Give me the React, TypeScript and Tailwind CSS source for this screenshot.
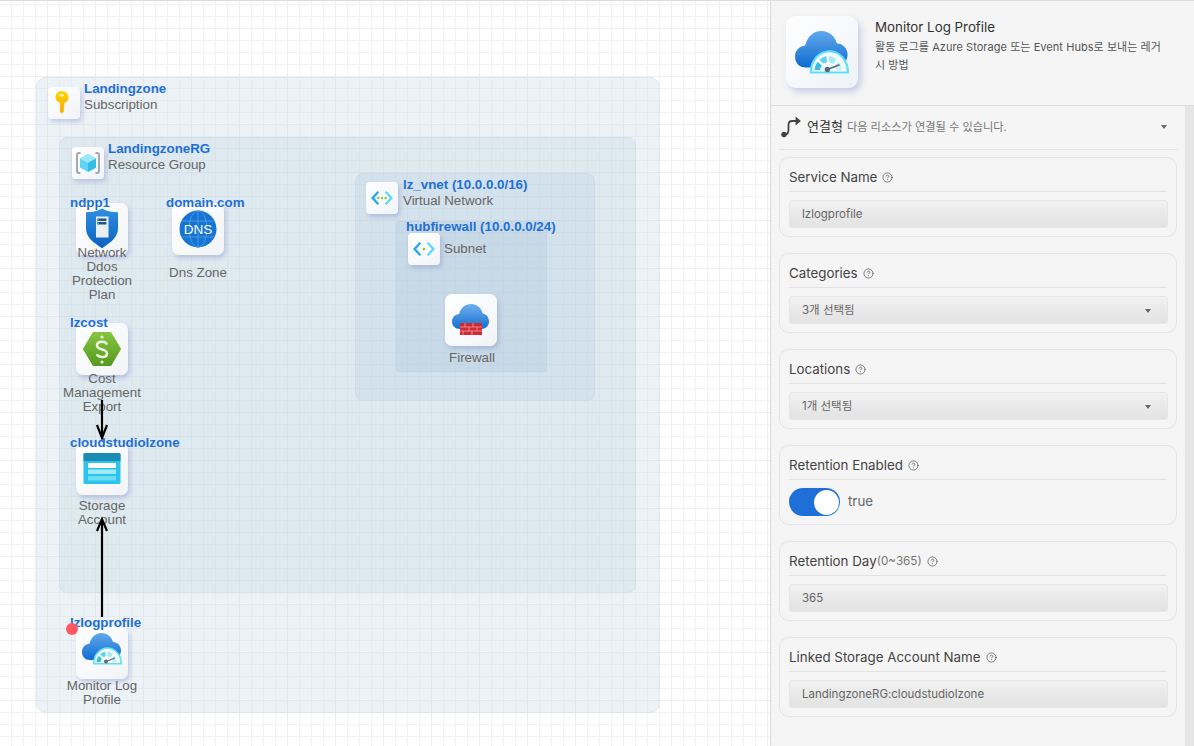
import { CircleHelp } from "lucide-react";
import type { ReactNode } from "react";

function KeyIcon() {
  return (
    <svg viewBox="0 0 32 32" className="h-8 w-8">
      <defs>
        <linearGradient id="key-g" x1="0" y1="0" x2="0" y2="1">
          <stop offset="0" stopColor="#ffd400" />
          <stop offset="1" stopColor="#f5a800" />
        </linearGradient>
      </defs>
      <path
        d="M13.500 4c3.800 0 7 2.800 7 6.300 0 2.500-1.600 4.700-4.100 5.700V19l-1.100 1.100 1.100 1.200-1.100 1.200 1.100 1.200-2.400 2.800-1.900-1.800v-8.700c-2.600-1-4.600-3.200-4.600-5.700C7.500 6.800 10.400 4 13.500 4z"
        fill="url(#key-g)"
      />
      <ellipse cx="13.500" cy="8.300" rx="2.500" ry="1.400" fill="#fff3b0" />
    </svg>
  );
}

function ResourceGroupIcon() {
  return (
    <svg viewBox="0 0 32 32" className="h-8 w-8">
      <path d="M8.500 6H7a2 2 0 0 0-2 2v16a2 2 0 0 0 2 2h1.500" fill="none" stroke="#a8a8a8" strokeWidth="2" />
      <path d="M23.500 6H25a2 2 0 0 1 2 2v16a2 2 0 0 1-2 2h-1.500" fill="none" stroke="#a8a8a8" strokeWidth="2" />
      <path d="M16 7l8 4.500v9L16 25l-8-4.500v-9z" fill="#5fd4f4" />
      <path d="M16 7l8 4.500-8 4.500-8-4.500z" fill="#9be8fb" />
      <path d="M16 16l8-4.500v9L16 25z" fill="#35bfe8" />
    </svg>
  );
}

function ShieldIcon() {
  return (
    <svg viewBox="0 0 52 52" className="h-[52px] w-[52px]">
      <defs>
        <linearGradient id="shield-g" x1="0" y1="0" x2="0" y2="1">
          <stop offset="0" stopColor="#2f8fe0" />
          <stop offset="1" stopColor="#0a62c0" />
        </linearGradient>
      </defs>
      <path d="M26 5.500c5 3 10 3.700 16 3.700v16c0 9-7 14-16 20-9-6-16-11-16-20v-16c6 0 11-.7 16-3.700z" fill="url(#shield-g)" />
      <rect x="20" y="13.500" width="12.500" height="21" fill="#e8eef2" />
      <rect x="21" y="15.500" width="9.500" height="2.400" rx="0.600" fill="#22557f" />
      <rect x="21" y="19" width="9.500" height="2.400" rx="0.600" fill="#22557f" />
      <circle cx="22" cy="16.700" r="0.700" fill="#7fe0f5" />
      <circle cx="22" cy="20.200" r="0.700" fill="#7fe0f5" />
    </svg>
  );
}

function DnsIcon() {
  return (
    <svg viewBox="0 0 52 52" className="h-[52px] w-[52px]">
      <circle cx="26" cy="26" r="18.500" fill="#1574d4" />
      <g fill="none" stroke="#5ca8ea" strokeWidth="0.700">
        <ellipse cx="26" cy="26" rx="9" ry="18.500" />
        <path d="M26 7.500v37M9 18h34M9 34h34" />
      </g>
      <text x="26" y="31" textAnchor="middle" fontFamily="Liberation Sans, sans-serif" fontSize="13.500" fill="#ffffff">
        DNS
      </text>
    </svg>
  );
}

function CostIcon() {
  return (
    <svg viewBox="0 0 52 52" className="h-[52px] w-[52px]">
      <defs>
        <linearGradient id="cost-g" x1="0" y1="0" x2="0" y2="1">
          <stop offset="0" stopColor="#86c440" />
          <stop offset="1" stopColor="#579a22" />
        </linearGradient>
      </defs>
      <path d="M17.500 10h17l9.500 16-9.500 16h-17L8 26z" fill="url(#cost-g)" stroke="url(#cost-g)" strokeWidth="2" strokeLinejoin="round" />
      <circle cx="26" cy="14" r="1.600" fill="#eef8de" />
      <circle cx="26" cy="39" r="1.600" fill="#eef8de" />
      <path d="M31 21.500c-1-2-2.800-2.700-5-2.700-3 0-5 1.400-5 3.600 0 5 10 3 10 8 0 2.200-2 3.600-5 3.600-2.200 0-4.200-.8-5.200-2.800" fill="none" stroke="#eef8de" strokeWidth="2.500" />
    </svg>
  );
}

function StorageIcon() {
  return (
    <svg viewBox="0 0 52 52" className="h-[52px] w-[52px]">
      <rect x="7.500" y="10" width="37" height="31" rx="1.500" fill="#2ac4ec" />
      <path d="M9 10h34a1.500 1.500 0 0 1 1.500 1.500V18h-37v-6.500A1.500 1.500 0 0 1 9 10z" fill="#1a8bb4" />
      <rect x="12" y="20" width="28" height="5" fill="#ffffff" />
      <rect x="12" y="26.500" width="28" height="4.500" fill="#9bebfb" />
      <rect x="12" y="33" width="28" height="4.500" fill="#6fdcf5" />
    </svg>
  );
}

function VnetIcon({ dots = 3 }: { dots?: number }) {
  return (
    <svg viewBox="0 0 32 32" className="h-8 w-8">
      <path d="M11.500 9L5 16l6.500 7 1.700-1.600L8.200 16l5-5.400z" fill="#28a8ea" />
      <path d="M20.500 9L27 16l-6.500 7-1.700-1.600 5-5.400-5-5.400z" fill="#5fd8f5" />
      {dots === 3 ? (
        <>
          <circle cx="12.300" cy="16" r="1.200" fill="#86c440" />
          <circle cx="16" cy="16" r="1.200" fill="#86c440" />
          <circle cx="19.700" cy="16" r="1.200" fill="#86c440" />
        </>
      ) : (
        <circle cx="16" cy="16" r="1.300" fill="#86c440" />
      )}
    </svg>
  );
}

function FirewallIcon() {
  return (
    <svg viewBox="0 0 52 52" className="h-[52px] w-[52px]">
      <defs>
        <linearGradient id="fw-g" x1="0" y1="0" x2="0" y2="1">
          <stop offset="0" stopColor="#6fb0ee" />
          <stop offset="1" stopColor="#1470d0" />
        </linearGradient>
      </defs>
      <path d="M15 35c-5 0-8-3.200-8-7.500 0-4 3-7.200 7.200-7.500C15.500 14 20 10 26 10s10.400 4 11.600 9.500c4 .5 6.400 4 6.400 8 0 4.300-3 7.500-8 7.500z" fill="url(#fw-g)" />
      <rect x="15" y="29" width="22" height="12" fill="#cf2a35" />
      <path d="M15 33h22M15 37h22M20 29v4M28 29v4M32 33v4M24 33v4M18 37v4M27 37v4" stroke="#f08e95" strokeWidth="0.900" fill="none" />
    </svg>
  );
}

function MonitorIcon({ size = 52 }: { size?: number }) {
  return (
    <svg viewBox="0 0 52 52" style={{ width: size, height: size }}>
      <defs>
        <linearGradient id="mon-g" x1="0" y1="0" x2="0" y2="1">
          <stop offset="0" stopColor="#62a9ec" />
          <stop offset="1" stopColor="#0f6cd0" />
        </linearGradient>
      </defs>
      <path d="M14 33c-5 0-8-3.500-8-8 0-4.500 3.200-7.800 7.500-8.200C15 10.500 19.500 6 25.500 6c5.700 0 10 3.700 11.500 9 4.500.4 8 3.800 8 8.300 0 5-3.500 9.700-8.500 9.700z" fill="url(#mon-g)" />
      <path d="M17 37.500v-1.700c0-8.200 6.500-15.500 14.500-15.500S46 27.600 46 35.800v1.700z" fill="#5fe0fa" />
      <path d="M18.700 36v-.5c0-7 5.700-13.700 12.800-13.700S44.300 28.500 44.300 35.500v.5z" fill="#f4fbfe" />
      <path d="M20.500 35c.3-2.700 1-4.500 2.400-6l3 2.600c-.7.800-1.100 2-1.300 3.400z" fill="#32bfe0" />
      <path d="M24 27.400c1.500-1.200 3.200-2.500 5.200-2.700l.6 4.500c-1 .2-1.900.6-2.700.9z" fill="#5fd3ec" />
      <path d="M31.500 24.600c1.900.2 3.700 1.500 5.200 2.600l-2.400 3.200c-.9-.6-1.900-1-3-1.200z" fill="#a4e8f7" />
      <path d="M38.200 28.500c1.300 1.500 2.200 4 2.500 6.500h-4c-.2-1-.6-2-1.200-2.800z" fill="#c8f0fa" />
      <path d="M30 34.500l9-3.500" stroke="#5a6b78" strokeWidth="1.300" />
      <circle cx="30" cy="34.500" r="2" fill="#5a6b78" />
    </svg>
  );
}

function Tile({ big, children, className }: { big?: boolean; children: ReactNode; className: string }) {
  return (
    <div
      className={`absolute ${big ? "h-[52px] w-[52px] rounded-[7px]" : "h-8 w-8 rounded-[4px]"} bg-gradient-to-br from-white to-[#f1f4f7] shadow-[2px_3px_4px_rgba(120,130,200,0.35)] ${className}`}
    >
      {children}
    </div>
  );
}

function NodeName({ className, children }: { className: string; children: ReactNode }) {
  return <div className={`absolute whitespace-nowrap text-[13.33px] font-bold leading-[14px] text-[#1f6fd8] ${className}`}>{children}</div>;
}

function NodeType({ className, children }: { className: string; children: ReactNode }) {
  return <div className={`absolute text-center text-[13.33px] leading-[14px] text-[#666666] ${className}`}>{children}</div>;
}

function Caret() {
  return <span className="h-0 w-0 border-x-[3.5px] border-t-[4px] border-x-transparent border-t-[#666666]" />;
}

function Card({ label, hint, children }: { label: string; hint?: string; children: ReactNode }) {
  return (
    <section className="h-20 rounded-[10px] border border-[#e4e4e4] px-[9px] pt-[9px]">
      <div className="flex h-[25px] items-start border-b border-[#e2e2e2] pt-[2px] text-[13.33px] leading-[16px] text-[#444444]">
        <span>{label}</span>
        {hint && <span className="text-[11.7px] text-[#777777]">{hint}</span>}
        <CircleHelp className="ml-[5px] mt-[3px] h-[11px] w-[11px] text-[#555555]" strokeWidth={1.6} />
      </div>
      {children}
    </section>
  );
}

function Field({ children, select }: { children: ReactNode; select?: boolean }) {
  return (
    <div className="mt-2 flex h-7 w-[379px] items-center justify-between rounded-[3px] border border-[#e6e6e6] bg-gradient-to-b from-[#f1f1f1] to-[#e3e3e3] pl-3 pr-4 pt-px text-[11.5px] text-[#666666]">
      <span>{children}</span>
      {select && <Caret />}
    </div>
  );
}

export default function App() {
  return (
    <div className="flex h-[746px] w-[1194px] overflow-hidden bg-white font-['Liberation_Sans',Arial,sans-serif]">
      {/* Diagram canvas */}
      <div className="relative w-[770px] shrink-0 border-t border-[#dddddd] bg-[linear-gradient(to_right,#eeeeee_1.5px,transparent_1.5px),linear-gradient(to_bottom,#eeeeee_1.5px,transparent_1.5px),linear-gradient(to_right,#f3f3f3_1.5px,transparent_1.5px),linear-gradient(to_bottom,#f3f3f3_1.5px,transparent_1.5px)] bg-[size:48px_48px,48px_48px,12px_12px,12px_12px] bg-[position:47px_27px,47px_27px,11px_3px,11px_3px]">
        <div className="absolute left-9 top-[76px] h-[636px] w-[624px] rounded-[10px] border border-[#dde7f0] bg-[rgba(200,218,230,0.35)]" />
        <div className="absolute left-[59px] top-[136px] h-[456px] w-[577px] rounded-[8px] border border-[#d5e0ea] bg-[rgba(190,212,226,0.3)]" />
        <div className="absolute left-[355px] top-[172px] h-[228px] w-[240px] rounded-[8px] border border-[#cddbe6] bg-[rgba(170,198,218,0.2)]" />
        <div className="absolute left-[396px] top-[220px] h-[151px] w-[151px] rounded-[3px] border border-[#c4d5e2] bg-[rgba(160,190,215,0.2)]" />

        <Tile className="left-12 top-[86px]"><KeyIcon /></Tile>
        <NodeName className="left-[84px] top-[81px]">Landingzone</NodeName>
        <NodeType className="left-[84px] top-[97px]">Subscription</NodeType>

        <Tile className="left-[72px] top-[146px]"><ResourceGroupIcon /></Tile>
        <NodeName className="left-[108px] top-[141px]">LandingzoneRG</NodeName>
        <NodeType className="left-[108px] top-[157px]">Resource Group</NodeType>

        <Tile big className="left-[76px] top-[202px]"><ShieldIcon /></Tile>
        <NodeName className="left-[70px] top-[195px]">ndpp1</NodeName>
        <NodeType className="left-[62px] top-[245px] w-20">Network Ddos Protection Plan</NodeType>

        <Tile big className="left-[172px] top-[202px]"><DnsIcon /></Tile>
        <NodeName className="left-[166px] top-[195px]">domain.com</NodeName>
        <NodeType className="left-[158px] top-[265px] w-20">Dns Zone</NodeType>

        <Tile big className="left-[76px] top-[322px]"><CostIcon /></Tile>
        <NodeName className="left-[70px] top-[315px]">lzcost</NodeName>
        <NodeType className="left-[57px] top-[371px] w-[90px]">Cost Management Export</NodeType>

        <Tile big className="left-[76px] top-[442px]"><StorageIcon /></Tile>
        <NodeName className="left-[70px] top-[435px]">cloudstudiolzone</NodeName>
        <NodeType className="left-[62px] top-[498px] w-20">Storage Account</NodeType>

        <Tile big className="left-[76px] top-[626px]"><MonitorIcon /></Tile>
        <NodeName className="left-[70px] top-[615px]">lzlogprofile</NodeName>
        <NodeType className="left-[57px] top-[678px] w-[90px]">Monitor Log Profile</NodeType>
        <div className="absolute left-[66px] top-[622px] h-3 w-3 rounded-full bg-[#ff5a63]" />

        <Tile className="left-[366px] top-[181px]"><VnetIcon /></Tile>
        <NodeName className="left-[403px] top-[177px]">lz_vnet (10.0.0.0/16)</NodeName>
        <NodeType className="left-[403px] top-[193px]">Virtual Network</NodeType>

        <NodeName className="left-[406px] top-[219px]">hubfirewall (10.0.0.0/24)</NodeName>
        <Tile className="left-[408px] top-[232px]"><VnetIcon dots={1} /></Tile>
        <NodeType className="left-[444px] top-[241px]">Subnet</NodeType>

        <Tile big className="left-[445px] top-[293px]"><FirewallIcon /></Tile>
        <NodeType className="left-[432px] top-[350px] w-20">Firewall</NodeType>

        {/* Connections */}
        <svg className="pointer-events-none absolute left-0 top-0 h-full w-full" fill="none" stroke="#000000" strokeWidth="2.2">
          <path d="M102 399v37M97 424l5 13 5-13" />
          <path d="M102 616V518M97 530l5-12 5 12" />
        </svg>
      </div>

      {/* Property panel */}
      <aside className="flex min-w-0 flex-1 flex-col border-l border-t border-[#dddddd] bg-[#f5f5f5] font-['Inter','Noto_Sans_CJK_KR',sans-serif]">
        <header className="flex h-[105px] shrink-0 border-b border-[#dcdcdc] pl-[15px] pt-[15px]">
          <div className="h-[72px] w-[72px] shrink-0 rounded-[10px] bg-gradient-to-br from-white to-[#eef2f6] pl-px pt-[7px] shadow-[3px_4px_6px_rgba(120,130,200,0.35)]">
            <MonitorIcon size={70} />
          </div>
          <div className="ml-[17px] w-[293px] pt-[3px]">
            <div className="text-[13.33px] leading-[16px] text-[#333333]">Monitor Log Profile</div>
            <p className="mt-[3px] text-[11px] leading-[18px] tracking-[0.05px] text-[#555555]">
              활동 로그를 Azure Storage 또는 Event Hubs로 보내는 레거시 방법
            </p>
          </div>
        </header>
        <div className="flex min-h-0 flex-1">
          <div className="min-w-0 flex-1 px-2">
            <div className="flex h-11 items-center border-b border-[#e2e2e2] pb-[1px] pr-[10px]">
              <svg viewBox="0 0 22 22" className="h-[22px] w-[22px] shrink-0" fill="none" stroke="#444444" strokeWidth="1.800">
                <circle cx="5" cy="18.500" r="1.800" fill="#444444" />
                <path d="M6 18.500c3 0 3.500-2 3.500-5V9c0-2.500 1-4 3.500-4h6" />
                <path d="M17.500 2.500l3 2.500-3 2.500z" fill="#444444" />
              </svg>
              <span className="ml-[6px] text-[13px] text-[#333333]">연결형</span>
              <span className="ml-[4px] text-[11.2px] text-[#777777]">다음 리소스가 연결될 수 있습니다.</span>
              <span className="ml-auto flex"><Caret /></span>
            </div>
            <div className="mt-[7px] flex flex-col gap-4">
              <Card label="Service Name"><Field>lzlogprofile</Field></Card>
              <Card label="Categories"><Field select>3개 선택됨</Field></Card>
              <Card label="Locations"><Field select>1개 선택됨</Field></Card>
              <Card label="Retention Enabled">
                <div className="mt-2 flex items-center">
                  <div className="flex h-7 w-[51px] items-center justify-end rounded-full bg-[#1f6fd8] pr-px">
                    <div className="h-[25px] w-[25px] rounded-full bg-white" />
                  </div>
                  <span className="ml-2 text-[13.33px] text-[#666666]">true</span>
                </div>
              </Card>
              <Card label="Retention Day" hint="(0~365)"><Field>365</Field></Card>
              <Card label="Linked Storage Account Name"><Field>LandingzoneRG:cloudstudiolzone</Field></Card>
            </div>
          </div>
          <div className="w-[9px] shrink-0 bg-[#e5e5e5]" />
        </div>
      </aside>
    </div>
  );
}
